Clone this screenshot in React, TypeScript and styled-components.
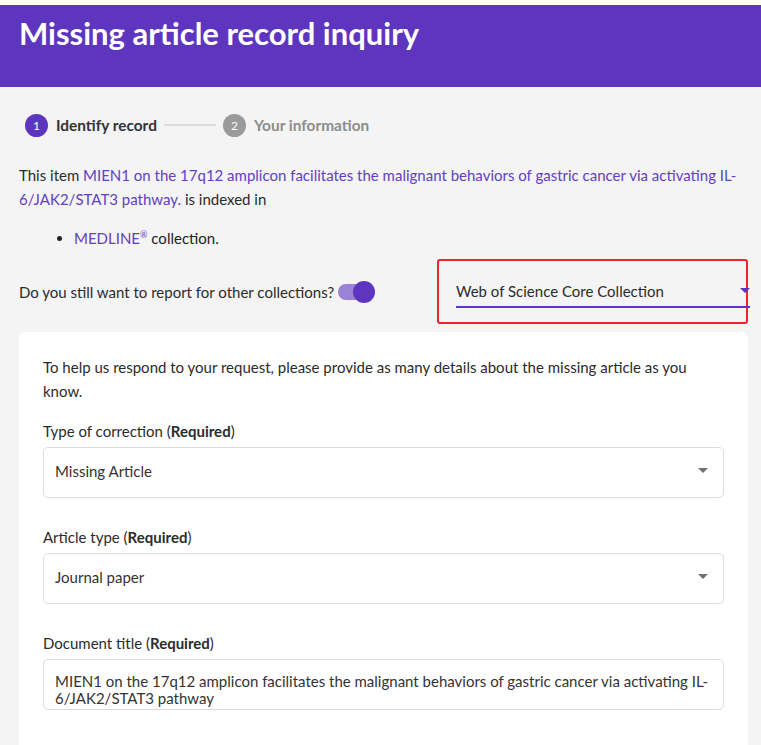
import React, { useState } from "react";
import styled, { createGlobalStyle } from "styled-components";

const GlobalStyle = createGlobalStyle`
  * { box-sizing: border-box; }
  body {
    margin: 0;
    background: #f4f4f4;
    font-family: Lato, "Noto Sans", sans-serif;
    color: #222;
  }
`;

const TopStrip = styled.div`
  height: 5px;
  background: #ffffff;
`;

const Header = styled.header`
  background: #5e35be;
  height: 82px;
  padding: 9px 19px 0;
`;

const Title = styled.h1`
  margin: 0;
  color: #ffffff;
  font-size: 31px;
  font-weight: 700;
`;

const Main = styled.main`
  padding: 22px 13px 0 19px;
`;

const Stepper = styled.div`
  display: flex;
  align-items: center;
  height: 32px;
  padding-left: 6px;
`;

const StepDot = styled.span<{ active?: boolean }>`
  width: 23px;
  height: 23px;
  border-radius: 50%;
  background: ${({ active }) => (active ? "#5e35be" : "#9a9a9a")};
  color: #ffffff;
  font-size: 12px;
  display: flex;
  align-items: center;
  justify-content: center;
  margin-right: 8px;
`;

const StepLabel = styled.span<{ active?: boolean }>`
  font-size: 15.4px;
  font-weight: 700;
  color: ${({ active }) => (active ? "#333" : "#8c8c8c")};
`;

const StepLine = styled.span`
  width: 52px;
  height: 2px;
  background: #dcdcdc;
  margin: 0 7px;
`;

const Paragraph = styled.p`
  margin: 22px 0 0;
  font-size: 15px;
  line-height: 24px;
  color: #2b2b2b;
`;

const TextLink = styled.a`
  color: #6240c0;
  text-decoration: none;
`;

const List = styled.ul`
  margin: 12px 0 0;
  padding-left: 55px;
  font-size: 15px;
  line-height: 24px;
`;

const Sup = styled.sup`
  font-size: 9px;
`;

const ToggleRow = styled.div`
  display: flex;
  align-items: center;
  margin-top: 9px;
  height: 65px;
`;

const ToggleText = styled.span`
  font-size: 15px;
  color: #2b2b2b;
`;

const Switch = styled.button<{ on: boolean }>`
  position: relative;
  width: 36px;
  height: 16px;
  border: none;
  padding: 0;
  margin-left: 4px;
  border-radius: 8px;
  background: ${({ on }) => (on ? "#9a83d6" : "#c4c4c4")};
  cursor: pointer;
`;

const Knob = styled.span<{ on: boolean }>`
  position: absolute;
  top: -3px;
  left: ${({ on }) => (on ? "15px" : "-2px")};
  width: 22px;
  height: 22px;
  border-radius: 50%;
  background: ${({ on }) => (on ? "#5e35be" : "#f0f0f0")};
`;

const Highlight = styled.div`
  margin-left: auto;
  width: 311px;
  height: 65px;
  border: 2px solid #e8262b;
  border-radius: 3px;
  padding: 16px 0 0 17px;
`;

const Underline = styled.div`
  display: flex;
  align-items: center;
  justify-content: space-between;
  height: 31px;
  margin-right: -4px;
  border-bottom: 2px solid #5e35be;
  font-size: 15px;
  color: #2b2b2b;
  padding-bottom: 2px;
`;

const Caret = styled.span<{ tone?: string }>`
  width: 0;
  height: 0;
  border-left: 5px solid transparent;
  border-right: 5px solid transparent;
  border-top: 5px solid ${({ tone }) => tone || "#666"};
`;

const Card = styled.section`
  margin-top: 8px;
  background: #ffffff;
  border-radius: 6px 6px 0 0;
  padding: 23px 24px 40px;
  min-height: 420px;
`;

const CardIntro = styled.p`
  margin: 0;
  font-size: 15px;
  line-height: 24px;
  color: #2b2b2b;
`;

const Field = styled.div`
  margin-top: 16px;
  & + & {
    margin-top: 27px;
  }
`;

const Label = styled.label`
  display: block;
  font-size: 15px;
  line-height: 24px;
  color: #2b2b2b;
  margin-bottom: 4px;

  b {
    font-weight: 700;
  }
`;

const SelectBox = styled.div`
  display: flex;
  align-items: center;
  justify-content: space-between;
  height: 51px;
  border: 1px solid #dcdcdc;
  border-radius: 5px;
  padding: 0 15px 4px 11px;
  font-size: 15px;
  color: #333;
`;

const TextBox = styled.div`
  height: 51px;
  border: 1px solid #dcdcdc;
  border-radius: 5px;
  padding: 13px 11px 0;
  font-size: 15px;
  line-height: 17px;
  color: #333;
  overflow: hidden;
`;

const Dropdown = ({ value }: { value: string }) => (
  <SelectBox>
    {value}
    <Caret tone="#707070" />
  </SelectBox>
);

const App = () => {
  const [on, setOn] = useState(true);

  return (
    <>
      <GlobalStyle />
      <TopStrip />
      <Header>
        <Title>Missing article record inquiry</Title>
      </Header>
      <Main>
        <Stepper>
          <StepDot active>1</StepDot>
          <StepLabel active>Identify record</StepLabel>
          <StepLine />
          <StepDot>2</StepDot>
          <StepLabel>Your information</StepLabel>
        </Stepper>
        <Paragraph>
          This item{" "}
          <TextLink href="#">
            MIEN1 on the 17q12 amplicon facilitates the malignant behaviors of
            gastric cancer via activating IL-6/JAK2/STAT3 pathway.
          </TextLink>{" "}
          is indexed in
        </Paragraph>
        <List>
          <li>
            <TextLink href="#">
              MEDLINE<Sup>®</Sup>
            </TextLink>{" "}
            collection.
          </li>
        </List>
        <ToggleRow>
          <ToggleText>Do you still want to report for other collections?</ToggleText>
          <Switch on={on} onClick={() => setOn(!on)} aria-label="toggle">
            <Knob on={on} />
          </Switch>
          <Highlight>
            <Underline>
              Web of Science Core Collection
              <Caret tone="#5e35be" />
            </Underline>
          </Highlight>
        </ToggleRow>
        <Card>
          <CardIntro>
            To help us respond to your request, please provide as many details
            about the missing article as you know.
          </CardIntro>
          <Field>
            <Label>
              Type of correction (<b>Required</b>)
            </Label>
            <Dropdown value="Missing Article" />
          </Field>
          <Field>
            <Label>
              Article type (<b>Required</b>)
            </Label>
            <Dropdown value="Journal paper" />
          </Field>
          <Field>
            <Label>
              Document title (<b>Required</b>)
            </Label>
            <TextBox>
              MIEN1 on the 17q12 amplicon facilitates the malignant behaviors of
              gastric cancer via activating IL-6/JAK2/STAT3 pathway
            </TextBox>
          </Field>
        </Card>
      </Main>
    </>
  );
};

export default App;
